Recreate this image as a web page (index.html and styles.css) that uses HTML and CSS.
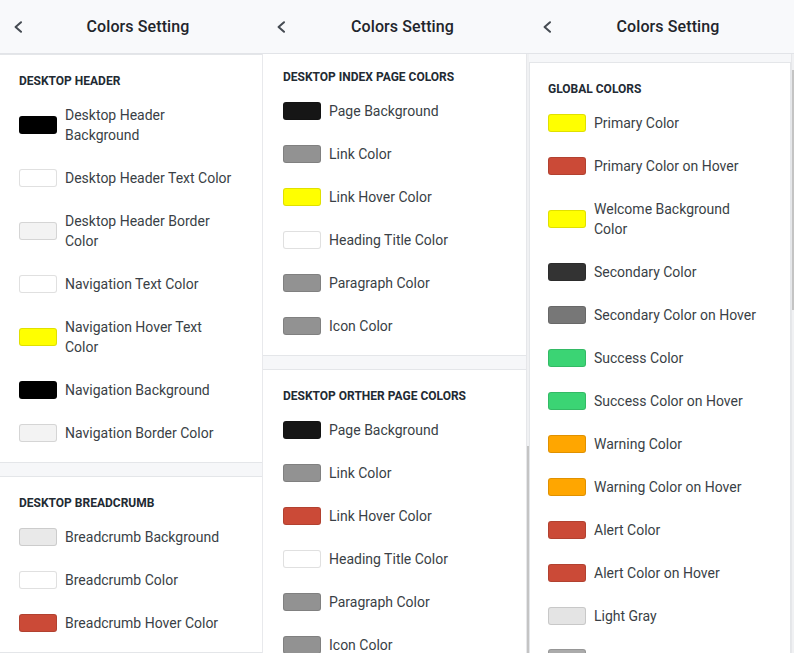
FILE: index.html
```html
<!DOCTYPE html>
<html lang="en">
<head>
<meta charset="utf-8">
<title>Colors Setting</title>
<link rel="stylesheet" href="styles.css">
</head>
<body>
<div class="screens">

  <section class="screen screen-1">
    <header class="topbar">
      <svg class="back" width="10" height="12" viewBox="0 0 10 12"><path d="M8 1.2 L2.6 6 L8 10.8" fill="none" stroke="#454b52" stroke-width="2" stroke-linecap="round" stroke-linejoin="round"/></svg>
      <h1 class="title">Colors Setting</h1>
    </header>
    <div class="viewport edge-right">
      <div class="scroll">
        <div class="card">
          <h2 class="card-title">DESKTOP HEADER</h2>
          <ul class="list">
            <li class="row"><span class="sw c-black"></span><span class="label">Desktop Header Background</span></li>
            <li class="row"><span class="sw c-white"></span><span class="label">Desktop Header Text Color</span></li>
            <li class="row"><span class="sw c-offwhite"></span><span class="label">Desktop Header Border Color</span></li>
            <li class="row"><span class="sw c-white"></span><span class="label">Navigation Text Color</span></li>
            <li class="row"><span class="sw c-yellow"></span><span class="label">Navigation Hover Text Color</span></li>
            <li class="row"><span class="sw c-black"></span><span class="label">Navigation Background</span></li>
            <li class="row"><span class="sw c-offwhite"></span><span class="label">Navigation Border Color</span></li>
          </ul>
        </div>
        <div class="card">
          <h2 class="card-title">DESKTOP BREADCRUMB</h2>
          <ul class="list">
            <li class="row"><span class="sw c-silver"></span><span class="label">Breadcrumb Background</span></li>
            <li class="row"><span class="sw c-white"></span><span class="label">Breadcrumb Color</span></li>
            <li class="row"><span class="sw c-red"></span><span class="label">Breadcrumb Hover Color</span></li>
          </ul>
        </div>
      </div>
    </div>
  </section>

  <section class="screen screen-2">
    <header class="topbar">
      <svg class="back" width="10" height="12" viewBox="0 0 10 12"><path d="M8 1.2 L2.6 6 L8 10.8" fill="none" stroke="#454b52" stroke-width="2" stroke-linecap="round" stroke-linejoin="round"/></svg>
      <h1 class="title">Colors Setting</h1>
    </header>
    <div class="viewport">
      <div class="scroll scrolled">
        <div class="card wide">
          <h2 class="card-title">DESKTOP INDEX PAGE COLORS</h2>
          <ul class="list">
            <li class="row"><span class="sw c-ink"></span><span class="label">Page Background</span></li>
            <li class="row"><span class="sw c-gray"></span><span class="label">Link Color</span></li>
            <li class="row"><span class="sw c-yellow"></span><span class="label">Link Hover Color</span></li>
            <li class="row"><span class="sw c-white"></span><span class="label">Heading Title Color</span></li>
            <li class="row"><span class="sw c-gray"></span><span class="label">Paragraph Color</span></li>
            <li class="row"><span class="sw c-gray"></span><span class="label">Icon Color</span></li>
          </ul>
        </div>
        <div class="card wide">
          <h2 class="card-title">DESKTOP ORTHER PAGE COLORS</h2>
          <ul class="list">
            <li class="row"><span class="sw c-ink"></span><span class="label">Page Background</span></li>
            <li class="row"><span class="sw c-gray"></span><span class="label">Link Color</span></li>
            <li class="row"><span class="sw c-red"></span><span class="label">Link Hover Color</span></li>
            <li class="row"><span class="sw c-white"></span><span class="label">Heading Title Color</span></li>
            <li class="row"><span class="sw c-gray"></span><span class="label">Paragraph Color</span></li>
            <li class="row"><span class="sw c-gray"></span><span class="label">Icon Color</span></li>
          </ul>
        </div>
      </div>
      <div class="sbar"><div class="thumb thumb-2"></div></div>
    </div>
  </section>

  <section class="screen screen-3">
    <header class="topbar">
      <svg class="back" width="10" height="12" viewBox="0 0 10 12"><path d="M8 1.2 L2.6 6 L8 10.8" fill="none" stroke="#454b52" stroke-width="2" stroke-linecap="round" stroke-linejoin="round"/></svg>
      <h1 class="title">Colors Setting</h1>
    </header>
    <div class="viewport">
      <div class="scroll padded">
        <div class="card boxed">
          <h2 class="card-title">GLOBAL COLORS</h2>
          <ul class="list">
            <li class="row"><span class="sw c-yellow"></span><span class="label">Primary Color</span></li>
            <li class="row"><span class="sw c-red"></span><span class="label">Primary Color on Hover</span></li>
            <li class="row"><span class="sw c-yellow"></span><span class="label">Welcome Background Color</span></li>
            <li class="row"><span class="sw c-charcoal"></span><span class="label">Secondary Color</span></li>
            <li class="row"><span class="sw c-dim"></span><span class="label">Secondary Color on Hover</span></li>
            <li class="row"><span class="sw c-green"></span><span class="label">Success Color</span></li>
            <li class="row"><span class="sw c-green"></span><span class="label">Success Color on Hover</span></li>
            <li class="row"><span class="sw c-orange"></span><span class="label">Warning Color</span></li>
            <li class="row"><span class="sw c-orange"></span><span class="label">Warning Color on Hover</span></li>
            <li class="row"><span class="sw c-red"></span><span class="label">Alert Color</span></li>
            <li class="row"><span class="sw c-red"></span><span class="label">Alert Color on Hover</span></li>
            <li class="row"><span class="sw c-light"></span><span class="label">Light Gray</span></li>
            <li class="row"><span class="sw c-mid"></span></li>
          </ul>
        </div>
      </div>
      <div class="sbar"><div class="thumb thumb-3"></div></div>
    </div>
  </section>

</div>
</body>
</html>
```
FILE: styles.css
```css
* { box-sizing: border-box; }

html, body {
  margin: 0;
  padding: 0;
  background: #ffffff;
}

body {
  font-family: Roboto, "Liberation Sans", sans-serif;
  color: #353a40;
}

.screens {
  display: grid;
  grid-template-columns: 263px 266px 265px;
  height: 653px;
  overflow: hidden;
}

.screen {
  display: flex;
  flex-direction: column;
  min-width: 0;
  height: 653px;
  overflow: hidden;
}

/* ---------- top bar ---------- */
.topbar {
  flex: 0 0 auto;
  height: 54px;
  display: flex;
  align-items: center;
  padding-left: 13px;
  background: #f8f9fb;
  border-bottom: 1px solid #e2e4e8;
}

.back {
  display: block;
  flex: 0 0 auto;
  margin-top: 1px;
}

.title {
  flex: 1 1 auto;
  margin: 0;
  padding-right: 10px;
  text-align: center;
  font-size: 16px;
  font-weight: 500;
  line-height: 20px;
  color: #1f252c;
  letter-spacing: 0.1px;
}

/* ---------- scroll area ---------- */
.viewport {
  flex: 1 1 auto;
  display: flex;
  min-height: 0;
  overflow: hidden;
}

.edge-right {
  border-right: 1px solid #e8e9ec;
}

.scroll {
  flex: 1 1 auto;
  min-width: 0;
  display: flex;
  flex-direction: column;
  gap: 13px;
  background: #f6f7f9;
}

.scrolled {
  margin-top: -4px;
}

.padded {
  padding-top: 8px;
}

/* ---------- scrollbar ---------- */
.sbar {
  flex: 0 0 3px;
  display: flex;
  flex-direction: column;
  background: #f0f1f3;
  border-left: 1px solid #e6e7ea;
}

.thumb {
  width: 2px;
  background: #c4c4c4;
}

.thumb-2 {
  margin-top: 392px;
  flex: 1 1 auto;
}

.thumb-3 {
  margin-top: 16px;
  height: 240px;
}

/* ---------- cards ---------- */
.card {
  background: #ffffff;
  border-top: 1px solid #e4e6e9;
  border-bottom: 1px solid #e4e6e9;
  padding: 18px 26px 19px 19px;
}

.wide {
  padding-left: 20px;
}

.boxed {
  border: 1px solid #e4e6e9;
  border-bottom: none;
  padding-left: 18px;
}

.card-title {
  margin: 0 0 16px;
  font-size: 12px;
  font-weight: 700;
  line-height: 16px;
  color: #222a33;
}

.list {
  list-style: none;
  margin: 0;
  padding: 0;
  display: flex;
  flex-direction: column;
  gap: 23px;
}

.row {
  display: flex;
  align-items: center;
  gap: 8px;
}

.label {
  font-size: 14px;
  line-height: 20px;
  color: #3a3f46;
}

.sw {
  flex: 0 0 38px;
  width: 38px;
  height: 18px;
  border-radius: 3px;
  border: 1px solid rgba(0, 0, 0, 0.12);
}

/* swatch colours */
.c-black { background: #000000; }
.c-ink { background: #161616; }
.c-charcoal { background: #333333; }
.c-dim { background: #777777; }
.c-gray { background: #929292; }
.c-mid { background: #ababab; }
.c-light { background: #e4e4e4; }
.c-silver { background: #e9e9e9; }
.c-offwhite { background: #f3f3f3; }
.c-white { background: #ffffff; }
.c-yellow { background: #ffff00; }
.c-red { background: #cb4a37; }
.c-green { background: #3bd474; }
.c-orange { background: #ffa600; }
```
